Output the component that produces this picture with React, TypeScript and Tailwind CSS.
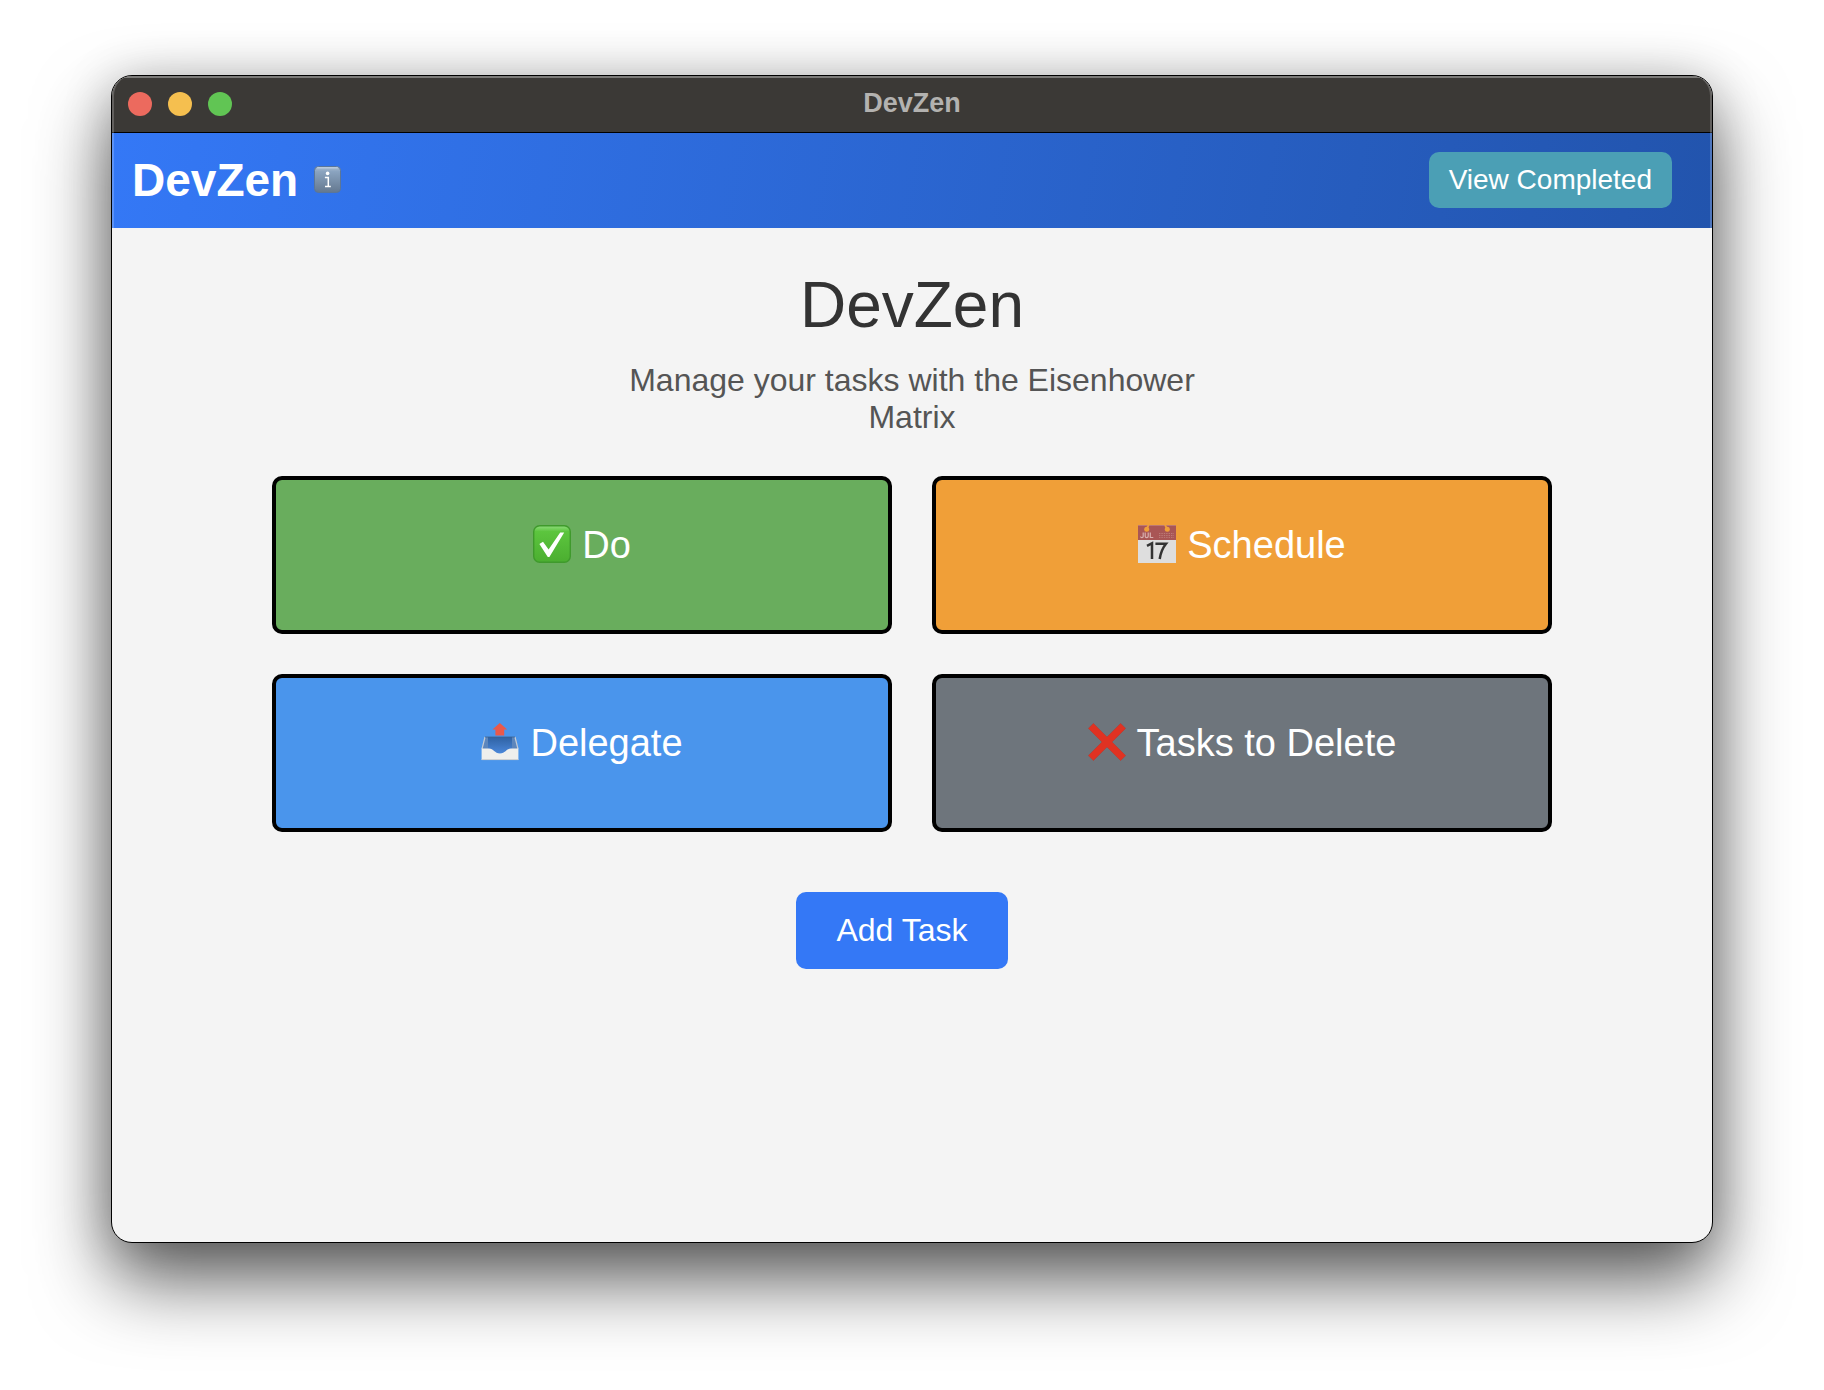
import React from "react";

function InfoIcon() {
  return (
    <svg viewBox="0 0 27 27" className="size-[27px]" aria-hidden="true">
      <defs>
        <linearGradient id="info" x1="0" y1="0" x2="0" y2="1">
          <stop offset="0" stopColor="#a9bdd2" />
          <stop offset="0.2" stopColor="#8aa3bf" />
          <stop offset="1" stopColor="#64788f" />
        </linearGradient>
      </defs>
      <rect x="0.5" y="0.5" width="26" height="26" rx="4" fill="url(#info)" stroke="#5b7698" />
      <rect x="3" y="1" width="21" height="1.4" rx="0.7" fill="#b9cadc" />
      <circle cx="13.6" cy="7.4" r="1.8" fill="#fff" />
      <path d="M10.9 11.4h3.4v9M11 20.6h5.8" fill="none" stroke="#fff" strokeWidth="1.5" />
    </svg>
  );
}

function CheckIcon() {
  return (
    <svg viewBox="0 0 38 38" className="size-[38px]" aria-hidden="true">
      <defs>
        <linearGradient id="check" x1="0" y1="0" x2="0" y2="1">
          <stop offset="0" stopColor="#8fdc7c" />
          <stop offset="0.16" stopColor="#5cc53e" />
          <stop offset="1" stopColor="#4bae30" />
        </linearGradient>
      </defs>
      <rect x="0.7" y="0.7" width="36.6" height="36.6" rx="6" fill="url(#check)" stroke="#3f9a2c" strokeWidth="1.4" />
      <path d="M6.4 19L10 16.8L15.6 24.4L27.2 7.4H31.2L16.4 32H14.8Z" fill="#fff" />
    </svg>
  );
}

function CalendarIcon() {
  return (
    <svg viewBox="0 0 38 38" className="size-[38px]" aria-hidden="true">
      <rect width="38" height="38" rx="0.6" fill="#dedede" />
      <path d="M0 0h38v15H0z" fill="#a95655" />
      <path d="M0 0h38v1H0z" fill="#bd7873" />
      <circle cx="8.7" cy="4.2" r="2.5" fill="#f09f38" />
      <circle cx="29.3" cy="4.2" r="2.5" fill="#f09f38" />
      <path d="M8.7 4.2L10.6 0M29.3 4.2L27 0" stroke="#f09f38" strokeWidth="1.8" />
      <g fill="none" stroke="#d8b0ae" strokeWidth="1.2">
        <path d="M5.2 7.5v4c0 1.4-2.5 1.4-2.7 0M7.2 7.5v3.7c0 1.8 3 1.8 3 0V7.5M12.3 7.5v5h3" />
        <path d="M21 8.5h15M21 10.5h15M21 12.4h15" stroke="#bd7f7c" strokeDasharray="1.4 1" strokeWidth="0.9" />
      </g>
      <path d="M9 20.8L14 18.2V34M17.4 18.8H28C24.6 23 22.6 28 21.7 34" fill="none" stroke="#333" strokeWidth="2.5" />
    </svg>
  );
}

function OutboxIcon() {
  return (
    <svg viewBox="0 0 38 38" className="size-[38px]" aria-hidden="true">
      <defs>
        <linearGradient id="tray" x1="0" y1="0" x2="0" y2="1">
          <stop offset="0" stopColor="#2f62a3" />
          <stop offset="1" stopColor="#4a86d8" />
        </linearGradient>
      </defs>
      <path d="M4 14H34L37 28H1Z" fill="#5c86bd" />
      <path d="M7 14H31V30H7Z" fill="url(#tray)" />
      <path d="M4 14L1 26M34 14L37 26" fill="none" stroke="#c5ccd4" strokeWidth="1.2" />
      <path d="M4 14H34" stroke="#3d6390" strokeWidth="0.8" />
      <path d="M0.6 25.5H8C12.5 25.5 13.5 30.4 19 30.4S25.5 25.5 30 25.5H37.4V37H0.6Z" fill="#efefed" />
      <path d="M0.6 36.6H37.4" stroke="#c7cacd" strokeWidth="0.9" />
      <path d="M18.8 0L26.2 6.6H23.2V12.6H14.4V6.6H11.4Z" fill="#e9594b" />
    </svg>
  );
}

function CrossIcon() {
  return (
    <svg viewBox="0 0 38 38" className="size-[38px]" aria-hidden="true">
      <path d="M5.4 .4L19 14L32.6 .4L37.6 5.4L24 19L37.6 32.6L32.6 37.6L19 24L5.4 37.6L.4 32.6L14 19L.4 5.4Z" fill="#e03222" stroke="#b83a30" strokeWidth="0.6" />
    </svg>
  );
}

const quadrants = [
  { label: "Do", icon: <CheckIcon />, color: "bg-[#69ad5d]" },
  { label: "Schedule", icon: <CalendarIcon />, color: "bg-[#f09f38]" },
  { label: "Delegate", icon: <OutboxIcon />, color: "bg-[#4a95ec]" },
  { label: "Tasks to Delete", icon: <CrossIcon />, color: "bg-[#6e757c]" },
];

export default function App() {
  return (
    <div className="flex min-h-screen flex-col overflow-hidden bg-white px-[111px] pt-[75px] pb-[147px] font-['Liberation_Sans',Arial,sans-serif]">
      <div className="relative flex flex-1 flex-col overflow-hidden rounded-[21px] border border-black bg-[#f4f4f4] shadow-[0_38px_76px_rgba(0,0,0,0.62),0_4px_50px_rgba(0,0,0,0.2)]">
        <div className="grid h-14 grid-cols-3 items-center border-t-2 border-[#7c7b79] bg-[#3b3936] px-4 pb-0.5">
          <div className="flex gap-4">
            <button type="button" aria-label="Close" className="size-6 rounded-full bg-[#ec6a5e]" />
            <button type="button" aria-label="Minimize" className="size-6 rounded-full bg-[#f5bf4f]" />
            <button type="button" aria-label="Zoom" className="size-6 rounded-full bg-[#61c554]" />
          </div>
          <div className="pb-0.5 text-center text-[27px] leading-8 font-bold text-[#b3b2b0]">DevZen</div>
        </div>

        <header className="flex h-24 items-center justify-between border-t border-black bg-linear-100 from-[#3478f6] to-[#2254ad] pr-10 pb-0.5 pl-5">
          <div className="flex items-center gap-4">
            <h1 className="text-[46px] leading-none font-bold text-white">DevZen</h1>
            <button type="button" aria-label="Information">
              <InfoIcon />
            </button>
          </div>
          <button type="button" className="rounded-[10px] bg-[#4b9fb5] px-5 py-3 text-[28px] leading-8 text-white">
            View Completed
          </button>
        </header>

        <main className="flex flex-1 flex-col items-center">
          <h2 className="mt-10 text-[64px] leading-[74px] text-[#333]">DevZen</h2>
          <p className="mt-5 max-w-[600px] text-center text-[32px] leading-[37px] text-[#555]">
            Manage your tasks with the Eisenhower Matrix
          </p>
          <div className="mt-10 grid w-4/5 grid-cols-2 gap-10">
            {quadrants.map((q) => (
              <button
                key={q.label}
                type="button"
                className={`flex h-[158px] items-start justify-center gap-[11px] rounded-[10px] border-4 border-black pt-[43px] text-[38px] leading-[44px] text-white ${q.color}`}
              >
                <span className="flex h-[42px] items-center">{q.icon}</span>
                {q.label}
              </button>
            ))}
          </div>
          <button type="button" className="mt-15 mr-5 rounded-[10px] bg-[#3478f6] px-10 py-5 text-[32px] leading-[37px] text-white">
            Add Task
          </button>
        </main>
        <div className="pointer-events-none absolute inset-x-0 top-0 h-[152px] rounded-t-[20px] border-x-2 border-white/20" />
      </div>
    </div>
  );
}
